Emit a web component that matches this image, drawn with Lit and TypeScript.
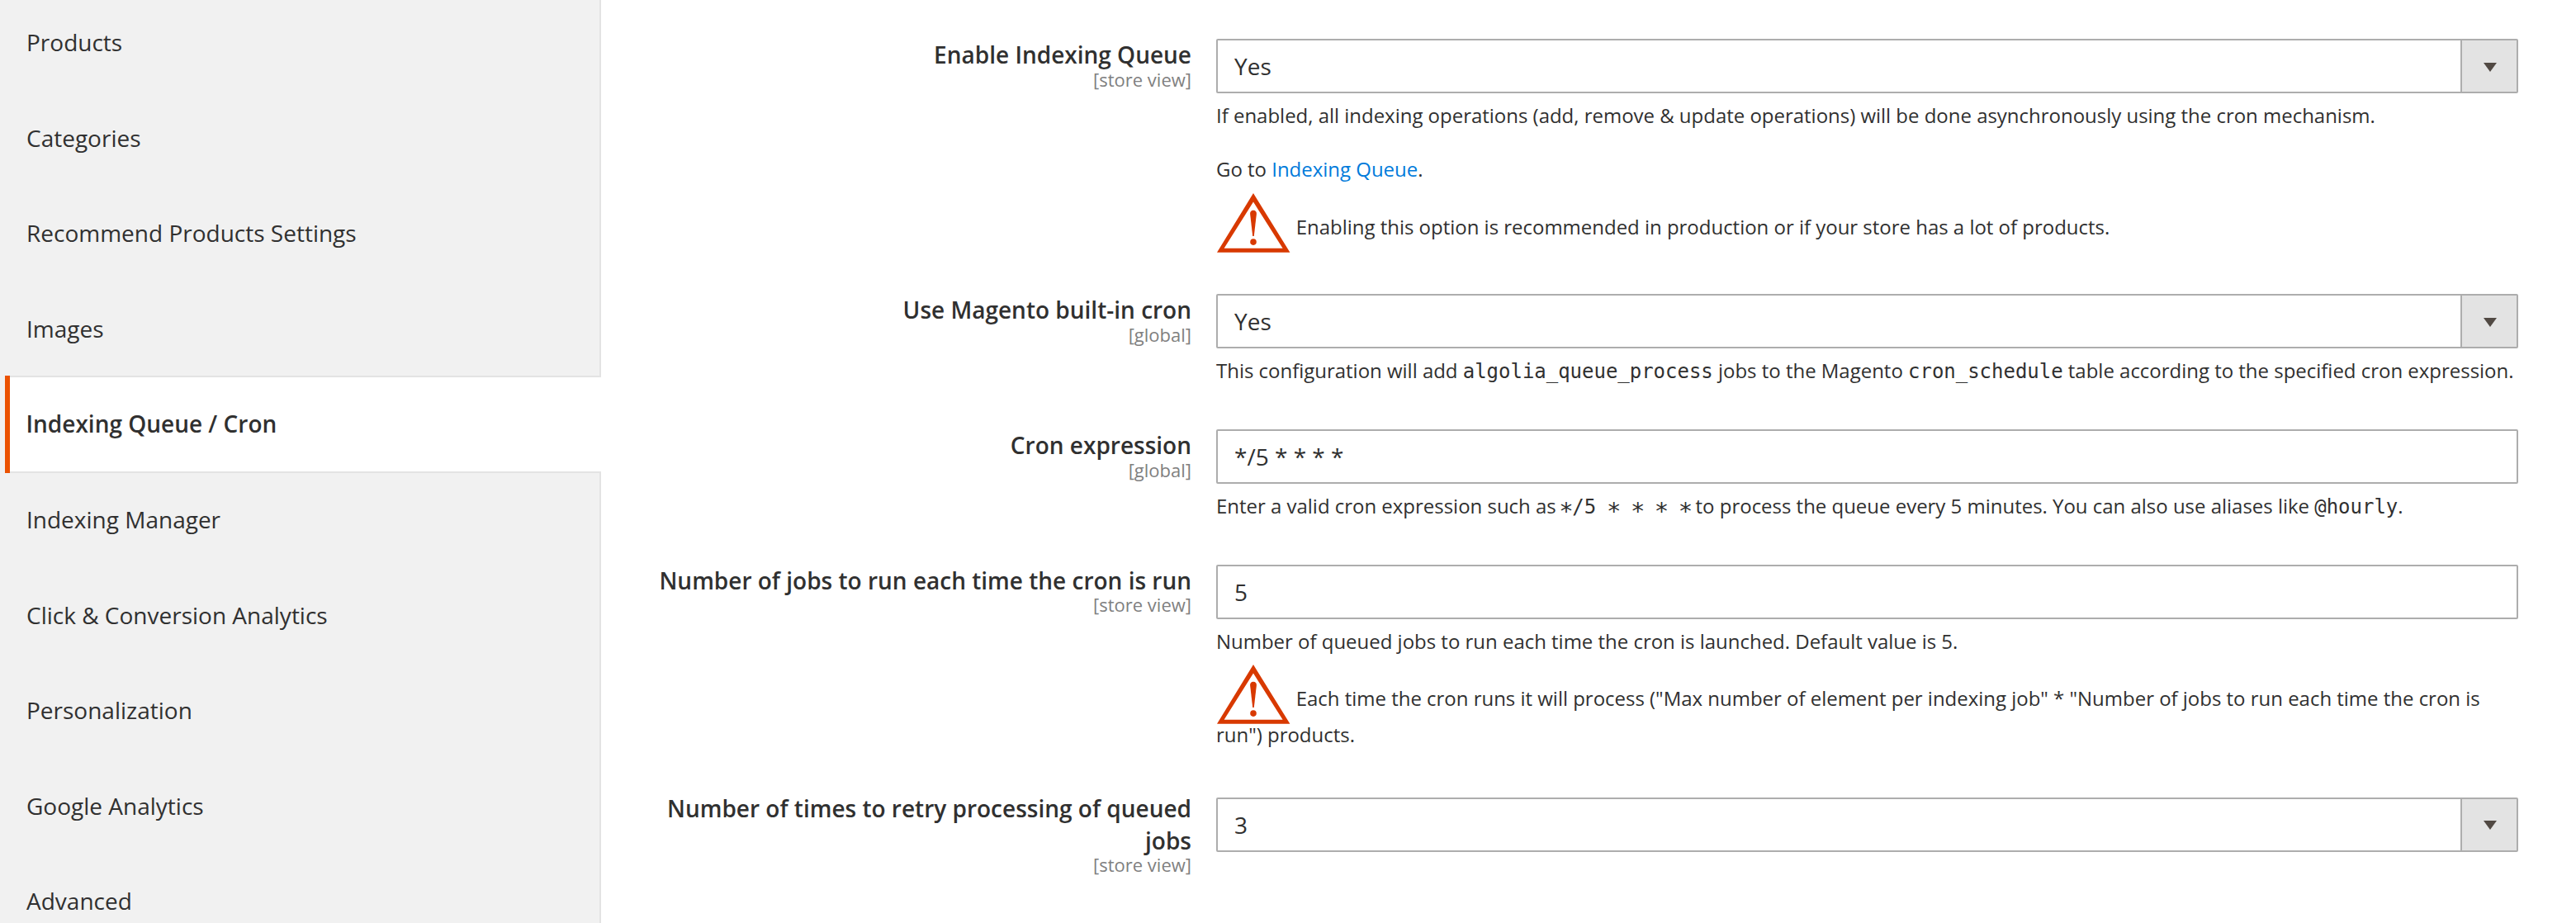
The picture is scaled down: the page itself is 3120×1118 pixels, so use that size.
import { LitElement, html, css, svg, TemplateResult } from "lit";
import { customElement, property } from "lit/decorators.js";
import { classMap } from "lit/directives/class-map.js";

interface Field {
  label: string;
  scope: string;
  value: string;
  select: boolean;
  tall?: boolean;
  note?: TemplateResult;
}

const SECTIONS = [
  "Products",
  "Categories",
  "Recommend Products Settings",
  "Images",
  "Indexing Queue / Cron",
  "Indexing Manager",
  "Click & Conversion Analytics",
  "Personalization",
  "Google Analytics",
  "Advanced",
];

const warning = html`<svg class="warning" width="90" height="80.5" viewBox="0 0 90 80.5" aria-hidden="true">
  ${svg`<path fill="#d83900" fill-rule="evenodd" d="M45 12 89.400 83.800H1ZM45 22.600 9.600 78.800H80.600Z"/>
  <path fill="#d83900" d="M45 32.800c2.700 0 4 1.600 3.900 4.300L45.800 64h-1.600L41.100 37.100c-.1-2.700 1.200-4.300 3.900-4.300Z"/>
  <circle fill="#d83900" cx="45" cy="71.100" r="3.800"/>`}
</svg>`;

const star = html`<span class="star">*</span>`;

const FIELDS: Field[] = [
  {
    label: "Enable Indexing Queue",
    scope: "[store view]",
    value: "Yes",
    select: true,
    note: html`If enabled, all indexing operations (add, remove &amp; update operations) will be done asynchronously using the cron mechanism.<br /><br />Go to <a class="link">Indexing Queue</a>.<br />${warning} Enabling this option is recommended in production or if your store has a lot of products.`,
  },
  {
    label: "Use Magento built-in cron",
    scope: "[global]",
    value: "Yes",
    select: true,
    note: html`This configuration will add <code>algolia_queue_process</code> jobs to the Magento <code>cron_schedule</code> table according to the specified cron expression.`,
  },
  {
    label: "Cron expression",
    scope: "[global]",
    value: "*/5 * * * *",
    select: false,
    note: html`Enter a valid cron expression such as <code class="cron">${star}/5 ${star} ${star} ${star} ${star}</code> to process the queue every 5 minutes. You can also use aliases like <code>@hourly</code>.`,
  },
  {
    label: "Number of jobs to run each time the cron is run",
    scope: "[store view]",
    value: "5",
    select: false,
    note: html`Number of queued jobs to run each time the cron is launched. Default value is 5.<br />${warning} Each time the cron runs it will process ("Max number of element per indexing job" * "Number of jobs to run each time the cron is run") products.`,
  },
  {
    label: "Number of times to retry processing of queued jobs",
    scope: "[store view]",
    value: "3",
    select: true,
    tall: true,
  },
];

@customElement("config-nav")
export class ConfigNav extends LitElement {
  @property() active = "";

  static styles = css`
    :host { display: block; width: 728px; flex: none; background: #f1f1f1; }
    .list { display: flex; flex-direction: column; margin: 0; padding: 0 0 0 6px; list-style: none;
      box-sizing: border-box; height: 1118px; overflow: hidden; }
    .item { box-sizing: border-box; flex: none; height: 117.6px; margin-bottom: -2px;
      display: flex; align-items: center; padding: 0 0 1.500px 26px;
      border-right: 2px solid #e3e3e3; font-size: 28px; line-height: 38px; color: #303030; }
    .item:first-child { margin-top: -7px; }
    .active { position: relative; background: #fff; font-weight: 600; padding-left: 25.500px;
      border: solid #e3e3e3; border-width: 2px 0; }
    .active::before { content: ""; position: absolute; left: 0; top: -2px; bottom: -2px; width: 6px; background: #eb5202; }
  `;

  render() {
    return html`<ul class="list">
      ${SECTIONS.map(
        (name) => html`<li class=${classMap({ item: true, active: name === this.active })}>${name}</li>`
      )}
    </ul>`;
  }
}

@customElement("config-form")
export class ConfigForm extends LitElement {
  static styles = css`
    :host { display: block; flex: 1; min-width: 0; }
    .form { display: flex; flex-direction: column; gap: 54px; padding: 47px 70px 0 0; }
    .row { display: flex; gap: 30px; }
    .head { width: 660px; flex: none; margin-left: auto; text-align: right; }
    .label { display: block; font-size: 28px; line-height: 38.08px; font-weight: 600; }
    .scope { display: block; margin-top: -3.4px; font-size: 22px; line-height: 29.9px; color: #808080; }
    .body { width: 1577px; flex: none; }
    .tall .body { padding-top: 5.300px; }
    .control { box-sizing: border-box; height: 66px; display: flex; align-items: center;
      justify-content: space-between; border: 2px solid #adadad; border-radius: 2px; padding-left: 20px;
      font-size: 28px; line-height: 38px; }
    .toggle { box-sizing: border-box; width: 68px; height: 62px; display: flex; align-items: center;
      justify-content: center; background: #e3e3e3; border-left: 2px solid #adadad; }
    .caret { display: block; padding-left: 2px; margin-top: 2px; }
    .note { padding-top: 11px; font-size: 24px; line-height: 32.64px; letter-spacing: -0.02px; }
    .warning { overflow: visible; vertical-align: -18.300px; margin-right: 0.500px; }
    .link { color: #007bdb; }
    code { font-family: "DejaVu Sans Mono", monospace; font-size: 24px; line-height: 1; }
    .cron { margin: 0 -1.200px 0 -1.200px; }
    .star { display: inline-block; width: 14.450px; text-align: center; font-size: 29px;
      letter-spacing: 0; line-height: 0; vertical-align: -7px; text-indent: -1.500px; }
  `;

  private control(f: Field) {
    return html`<div class="control">
      <span>${f.value}</span>
      ${f.select
        ? html`<span class="toggle"
            ><svg class="caret" width="16" height="11" viewBox="0 0 16 11"><path fill="#514943" d="M0 0h16L8 11Z" /></svg
          ></span>`
        : null}
    </div>`;
  }

  render() {
    return html`<div class="form">
      ${FIELDS.map(
        (f) => html`<div class=${classMap({ row: true, tall: !!f.tall })}>
          <div class="head"><span class="label">${f.label}</span><span class="scope">${f.scope}</span></div>
          <div class="body">
            ${this.control(f)} ${f.note ? html`<div class="note">${f.note}</div>` : null}
          </div>
        </div>`
      )}
    </div>`;
  }
}

@customElement("app-root")
export class AppRoot extends LitElement {
  static styles = css`
    :host { display: block; height: 1118px; overflow: hidden; background: #fff; color: #303030;
      font-family: "Open Sans", "Noto Sans", sans-serif; }
    .page { display: flex; height: 1118px; }
  `;

  render() {
    return html`<div class="page">
      <config-nav active="Indexing Queue / Cron"></config-nav>
      <config-form></config-form>
    </div>`;
  }
}
